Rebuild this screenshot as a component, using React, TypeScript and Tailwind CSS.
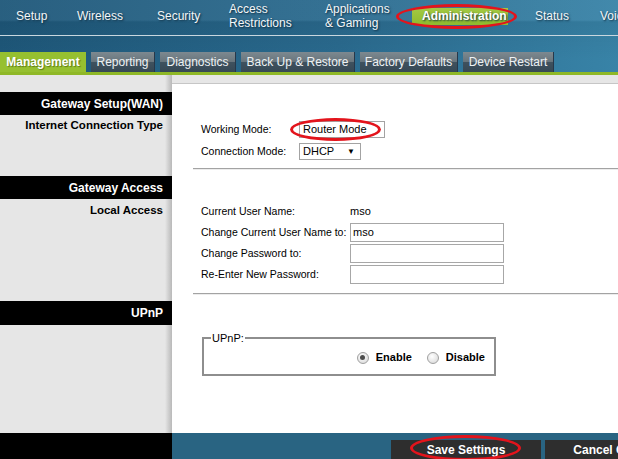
import React from 'react';

const navItems: { lines: string[]; width: string; active?: boolean }[] = [
  { lines: ['Setup'], width: 'w-[61px]' },
  { lines: ['Wireless'], width: 'w-[80px]' },
  { lines: ['Security'], width: 'w-[72px]' },
  { lines: ['Access', 'Restrictions'], width: 'w-[96px]' },
  { lines: ['Applications', '& Gaming'], width: 'w-[87px]' },
  { lines: ['Administration'], width: 'w-[123px]', active: true },
  { lines: ['Status'], width: 'w-[65px]' },
  { lines: ['Voice'], width: 'w-[60px]' },
];

const subTabs: { label: string; width: string; active?: boolean }[] = [
  { label: 'Management', width: 'w-[86px]', active: true },
  { label: 'Reporting', width: 'w-[64px]' },
  { label: 'Diagnostics', width: 'w-[76px]' },
  { label: 'Back Up & Restore', width: 'w-[114px]' },
  { label: 'Factory Defaults', width: 'w-[98px]' },
  { label: 'Device Restart', width: 'w-[91px]' },
];

const leftBg =
  'bg-[linear-gradient(90deg,#e6e6e6_0,#e6e6e6_165px,#d2d2d2_168px,#b9b9b9_172px)]';

function Ring({ className }: { className: string }) {
  // red marker ellipse drawn over the screenshot
  return (
    <span
      className={`pointer-events-none absolute rounded-[50%] border-[3px] border-[#e3141c] ${className}`}
    />
  );
}

function SectionBar({ title, height }: { title: string; height: string }) {
  return (
    <div
      className={`${height} bg-black flex items-center justify-end pr-[9px] text-white font-bold text-[12px]`}
    >
      {title}
    </div>
  );
}

function Divider() {
  return (
    <div className="mt-auto ml-[21px] border-t border-[#a3a3a3] border-b border-b-[#ececec]" />
  );
}

function TextBox({ value }: { value?: string }) {
  return (
    <div className="w-[154px] shrink-0 h-[19px] border border-[#a7a7a7] bg-white pl-[2px] flex items-center text-[11px] leading-none">
      {value}
    </div>
  );
}

function Radio({ checked }: { checked?: boolean }) {
  return (
    <span className="w-[12px] h-[12px] rounded-full border border-[#a0a0a0] bg-[radial-gradient(circle_at_40%_35%,#ffffff,#d4d4d4)] flex items-center justify-center">
      {checked && <span className="w-[5px] h-[5px] rounded-full bg-[#4d4d4d]" />}
    </span>
  );
}

function FormRow({ label, children }: { label: string; children: React.ReactNode }) {
  return (
    <div className="flex items-center h-[21px] whitespace-nowrap">
      <span className="w-[149px] shrink-0">{label}</span>
      {children}
    </div>
  );
}

export default function App() {
  return (
    <div className="w-[618px] h-[459px] overflow-hidden bg-[#e6e6e6] font-['Liberation_Sans',Arial,sans-serif] text-black">
      {/* Top navigation */}
      <div className="bg-[linear-gradient(180deg,rgba(255,255,255,0.05)_0,rgba(255,255,255,0.05)_20px,rgba(0,0,0,0.06)_22px,rgba(0,0,0,0)_60px),linear-gradient(90deg,#1e5779,#2a6a8e_55%,#3883a7)]">
        <div className="h-[32px] flex items-center pl-[16px] whitespace-nowrap overflow-hidden text-[12px] leading-[14px] text-[#f3f6f8] [text-shadow:1px_1px_2px_#0a2a3e]">
          {navItems.map((item) =>
            item.active ? (
              <div key={item.lines[0]} className={`${item.width} shrink-0`}>
                <div className="relative w-[96px] h-[17px] pl-[10px] flex items-center bg-[linear-gradient(180deg,#a3c944,#8fbb2c)] font-bold text-white">
                  {item.lines[0]}
                  <Ring className="-left-[16px] -top-[4px] w-[121px] h-[25px]" />
                </div>
              </div>
            ) : (
              <div key={item.lines[0]} className={`${item.width} shrink-0 flex flex-col`}>
                {item.lines.map((line) => (
                  <span key={line}>{line}</span>
                ))}
              </div>
            )
          )}
        </div>
        <div className="mt-[3px] h-px bg-[#c9d7df]" />
        <div className="pt-[16px] h-[36px] flex items-end gap-[5px] text-[12px] whitespace-nowrap overflow-hidden">
          {subTabs.map((tab) =>
            tab.active ? (
              <div
                key={tab.label}
                className={`${tab.width} shrink-0 h-[20px] bg-[#96c030] text-white font-bold flex items-center justify-center [text-shadow:1px_1px_1px_#5d7a16]`}
              >
                {tab.label}
              </div>
            ) : (
              <div
                key={tab.label}
                className={`${tab.width} shrink-0 h-[20px] bg-[linear-gradient(180deg,#7d8990,#68757d_48%,#3f515e_52%,#364855)] border-r border-[#27384a] text-[#eef2f4] flex items-center justify-center`}
              >
                {tab.label}
              </div>
            )
          )}
        </div>
        <div className="h-[3px] bg-[#8fb827]" />
      </div>

      {/* Top strip */}
      <div className="flex h-[9px]">
        <div className={`w-[172px] shrink-0 ${leftBg}`} />
        <div className="flex-1 bg-[#e6e6e6] border-b border-[#c6c6c6]" />
      </div>

      {/* Gateway Setup(WAN) */}
      <div className="flex h-[86px]">
        <div className={`w-[172px] shrink-0 pt-[8px] ${leftBg}`}>
          <SectionBar title="Gateway Setup(WAN)" height="h-[23px]" />
          <div className="mt-[3px] pr-[9px] text-right font-bold text-[11.5px] leading-[14px]">
            Internet Connection Type
          </div>
        </div>
        <div className="flex-1 bg-white flex flex-col text-[10.5px]">
          <div className="pt-[37px] pl-[29px] flex flex-col gap-[5px]">
            <div className="flex items-center h-[17px]">
              <span className="w-[98px]">Working Mode:</span>
              <div className="relative w-[86px] h-[17px] border border-[#a3a3a3] pl-[3px] flex items-center text-[11px]">
                Router Mode
                <Ring className="-left-[10px] -top-[4px] w-[91px] h-[23px]" />
              </div>
            </div>
            <div className="flex items-center h-[17px]">
              <span className="w-[98px]">Connection Mode:</span>
              <div className="w-[62px] h-[17px] border border-[#a3a3a3] pl-[3px] pr-[5px] flex items-center justify-between text-[11px]">
                <span>DHCP</span>
                <span className="text-[8px]">▼</span>
              </div>
            </div>
          </div>
          <Divider />
        </div>
      </div>

      {/* Gateway Access */}
      <div className="flex h-[125px]">
        <div className={`w-[172px] shrink-0 pt-[6px] ${leftBg}`}>
          <SectionBar title="Gateway Access" height="h-[23px]" />
          <div className="mt-[4px] pr-[9px] text-right font-bold text-[11.5px] leading-[14px]">
            Local Access
          </div>
        </div>
        <div className="flex-1 bg-white flex flex-col text-[10.5px]">
          <div className="pt-[31px] pl-[29px]">
            <FormRow label="Current User Name:">
              <span className="text-[11px]">mso</span>
            </FormRow>
            <FormRow label="Change Current User Name to:">
              <TextBox value="mso" />
            </FormRow>
            <FormRow label="Change Password to:">
              <TextBox />
            </FormRow>
            <FormRow label="Re-Enter New Password:">
              <TextBox />
            </FormRow>
          </div>
          <Divider />
        </div>
      </div>

      {/* UPnP */}
      <div className="flex h-[138px]">
        <div className={`w-[172px] shrink-0 pt-[6px] ${leftBg}`}>
          <SectionBar title="UPnP" height="h-[24px]" />
        </div>
        <div className="flex-1 bg-white pt-[42px] pl-[30px]">
          <div className="relative w-[294px] h-[39px] border-2 border-[#8e8e8e] flex items-center justify-end pr-[9px] pt-[2px] text-[11px]">
            <span className="absolute left-[7px] -top-[7px] bg-white px-px leading-[12px]">UPnP:</span>
            <Radio checked />
            <span className="ml-[7px] font-bold">Enable</span>
            <span className="ml-[15px]">
              <Radio />
            </span>
            <span className="ml-[7px] font-bold">Disable</span>
          </div>
        </div>
      </div>

      {/* Bottom bar */}
      <div className="flex h-[26px]">
        <div className="w-[172px] shrink-0 bg-black" />
        <div className="flex-1 bg-[#296482] pl-[219px] pt-[7px] flex gap-[4px] overflow-hidden whitespace-nowrap">
          <div className="relative w-[150px] shrink-0 h-[19px] bg-[#2e2e2e] text-white font-bold text-[12px] flex items-center justify-center">
            Save Settings
            <Ring className="left-[19px] -top-[5px] w-[111px] h-[26px]" />
          </div>
          <div className="w-[150px] shrink-0 h-[19px] bg-[#2e2e2e] text-white font-bold text-[12px] flex items-center justify-center">
            Cancel Changes
          </div>
        </div>
      </div>
    </div>
  );
}
